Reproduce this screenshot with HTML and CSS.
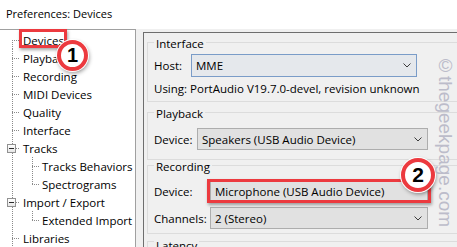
FILE: index.html
```html
<!DOCTYPE html>
<html lang="en">
<head>
  <meta charset="UTF-8">
  <title>Preferences: Devices</title>
  <link rel="stylesheet" href="styles.css">
</head>
<body>

<div class="title">Preferences: Devices</div>

<div class="main">
  <ul class="tree">
    <li class="node first">Devices</li>
    <li class="node">Playback</li>
    <li class="node">Recording</li>
    <li class="node">MIDI Devices</li>
    <li class="node">Quality</li>
    <li class="node">Interface</li>
    <li class="node"><span class="toggle"></span>Tracks</li>
    <li class="node child">Tracks Behaviors</li>
    <li class="node child last">Spectrograms</li>
    <li class="node"><span class="toggle"></span>Import / Export</li>
    <li class="node child last">Extended Import</li>
    <li class="node">Libraries</li>
  </ul>

  <div class="side">
    <div class="panel">
      <div class="group g-interface">
        <div class="group-title">Interface</div>
        <div class="field">
          <label class="lbl-host">Host:</label>
          <div class="select focus w-host">MME<svg class="chev" width="8" height="5"><path d="M0.5 0.5 L4 4 L7.5 0.5" /></svg></div>
        </div>
        <div class="info">Using: PortAudio V19.7.0-devel, revision unknown</div>
      </div>

      <div class="group g-playback">
        <div class="group-title">Playback</div>
        <div class="field">
          <label class="lbl-play">Device:</label>
          <div class="select w-play">Speakers (USB Audio Device)<svg class="chev" width="8" height="5"><path d="M0.5 0.5 L4 4 L7.5 0.5" /></svg></div>
        </div>
      </div>

      <div class="group g-recording">
        <div class="group-title">Recording</div>
        <div class="field">
          <label class="lbl-rec">Device:</label>
          <div class="select w-rec">Microphone (USB Audio Device)<svg class="chev" width="8" height="5"><path d="M0.5 0.5 L4 4 L7.5 0.5" /></svg></div>
        </div>
        <div class="field f-channels">
          <label class="lbl-rec">Channels:</label>
          <div class="select w-rec">2 (Stereo)<svg class="chev" width="8" height="5"><path d="M0.5 0.5 L4 4 L7.5 0.5" /></svg></div>
        </div>
      </div>

      <div class="group g-latency">
        <div class="group-title">Latency</div>
      </div>
    </div>
  </div>
</div>

<!-- annotations drawn over the dialog -->
<div class="mark mark-1"></div>
<div class="badge badge-1">1</div>
<div class="mark mark-2"></div>
<div class="badge badge-2">2</div>
<div class="watermark">©thegeekpage.com</div>

</body>
</html>
```

FILE: styles.css
```css
* {
  margin: 0;
  padding: 0;
  box-sizing: border-box;
}
body {
  width: 457px;
  height: 247px;
  overflow: hidden;
  position: relative;
  background: #fff;
  color: #000;
  font-family: "Open Sans", "Noto Sans", sans-serif;
  font-size: 11.5px;
}
.title {
  height: 29px;
  line-height: 28px;
  padding-left: 6px;
  font-size: 11px;
}
.main {
  display: flex;
  height: 218px;
}

/* tree */
.tree {
  list-style: none;
  width: 136px;
  flex: none;
  border-top: 1px solid #a0a0a0;
  border-right: 1px solid #a0a0a0;
  padding-top: 1px;
  background: #fff;
}
.node {
  --dot: #8a8a8a;
  display: flex;
  align-items: center;
  height: 18px;
  padding-left: 23px;
  white-space: nowrap;
  background-image:
    repeating-linear-gradient(to bottom, var(--dot) 0 1px, transparent 1px 2px),
    repeating-linear-gradient(to right, var(--dot) 0 1px, transparent 1px 2px);
  background-size: 1px 18px, 8px 1px;
  background-position: 12px 0, 12px 9px;
  background-repeat: no-repeat;
}
.node.first {
  background-size: 1px 9px, 8px 1px;
  background-position: 12px 9px, 12px 9px;
}
.node.child {
  padding-left: 42px;
  background-image:
    repeating-linear-gradient(to bottom, var(--dot) 0 1px, transparent 1px 2px),
    repeating-linear-gradient(to bottom, var(--dot) 0 1px, transparent 1px 2px),
    repeating-linear-gradient(to right, var(--dot) 0 1px, transparent 1px 2px);
  background-size: 1px 18px, 1px 18px, 8px 1px;
  background-position: 12px 0, 32px 0, 32px 9px;
}
.node.child.last {
  background-size: 1px 18px, 1px 10px, 8px 1px;
}
.toggle {
  width: 9px;
  height: 9px;
  margin-left: -16px;
  margin-right: 7px;
  border: 1px solid #919191;
  background: linear-gradient(#2b2b2b, #2b2b2b) center / 5px 1px no-repeat, linear-gradient(#fff, #e6e6e6);
}

/* right side */
.side {
  flex: 1;
  min-width: 0;
  background: #f0f0f0;
  padding: 3px 0 0 7px;
}
.panel {
  width: 340px;
  height: 100%;
  border-top: 1px solid #6e6e6e;
  border-left: 1px solid #6e6e6e;
  padding-left: 3px;
  background: #f0f0f0;
}
.group {
  border: 1px solid #dcdcdc;
  padding: 0 0 0 6px;
}
.group-title {
  width: fit-content;
  margin-top: -6px;
  padding: 0 2px;
  line-height: 14px;
  background: #f0f0f0;
}
.g-interface { margin-top: 9px; padding-bottom: 3px; }
.g-interface .field { margin-top: 3px; }
.g-playback { margin-top: 10px; padding-bottom: 9px; }
.g-playback .field { margin-top: 7px; }
.g-recording { margin-top: 5px; padding-bottom: 4px; }
.g-recording .field { margin-top: 6px; }
.g-recording .f-channels { margin-top: 5px; }
.g-latency { margin-top: 7px; height: 20px; }
.g-latency .group-title { margin-top: -3px; }

.field {
  display: flex;
  align-items: center;
}
.field label { flex: none; }
.lbl-host { width: 37px; }
.lbl-play { width: 43px; }
.lbl-rec { width: 56px; }

.select {
  display: flex;
  align-items: center;
  height: 22px;
  padding-left: 4px;
  border: 1px solid #adadad;
  background: #e1e1e1;
  white-space: nowrap;
}
.select.focus {
  height: 23px;
  border-color: #7a9cc8;
  background: #e5e8ec;
}
.w-host { width: 226px; }
.w-play { width: 231px; }
.w-rec { width: 218px; }
.chev {
  margin-left: auto;
  margin-right: 5px;
  flex: none;
}
.chev path {
  fill: none;
  stroke: #3c3c3c;
  stroke-width: 1;
}
.info {
  margin-top: 3px;
  line-height: 18px;
  white-space: nowrap;
}

/* annotations */
.mark {
  position: absolute;
  border: 3px solid #ec3a3f;
  box-shadow: 1px 2px 3px rgba(0, 0, 0, .35);
}
.mark-1 { left: 19px; top: 29px; width: 48px; height: 19px; }
.mark-2 { left: 207px; top: 179px; width: 224px; height: 24px; }
.badge {
  position: absolute;
  display: flex;
  align-items: center;
  justify-content: center;
  border-radius: 50%;
  border: 4px solid #ec3a3f;
  background: #fff;
  box-shadow: 0 0 0 1px #fff, 1px 2px 4px rgba(0, 0, 0, .45);
  font-family: "Liberation Sans", Arial, sans-serif;
  font-weight: bold;
  color: #000;
}
.badge-1 { left: 57px; top: 40px; width: 31px; height: 31px; font-size: 20px; }
.badge-2 { left: 401px; top: 158px; width: 34px; height: 34px; font-size: 21px; }
.watermark {
  position: absolute;
  left: 436px;
  top: 55px;
  writing-mode: vertical-rl;
  font-family: "Liberation Sans", Arial, sans-serif;
  font-size: 19px;
  line-height: 19px;
  color: #bcbcca;
}
```
